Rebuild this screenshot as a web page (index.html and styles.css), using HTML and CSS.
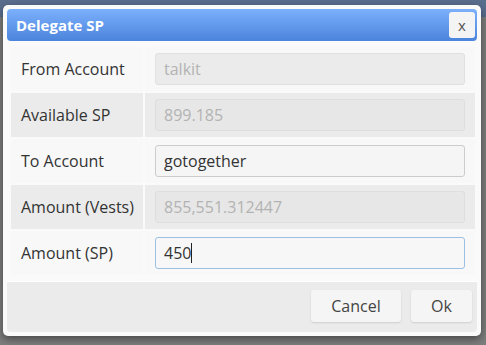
FILE: index.html
```html
<!DOCTYPE html>
<html>
<head>
<meta charset="utf-8">
<link rel="stylesheet" href="styles.css">
</head>
<body>
<div class="page">
  <div class="dialog">
    <div class="titlebar">
      <span class="title">Delegate SP</span>
      <button class="close">x</button>
    </div>
    <div class="content">
      <div class="row odd">
        <div class="label">From Account</div>
        <div class="value"><input class="field disabled" value="talkit" disabled></div>
      </div>
      <div class="row even">
        <div class="label">Available SP</div>
        <div class="value"><input class="field disabled" value="899.185" disabled></div>
      </div>
      <div class="row odd">
        <div class="label">To Account</div>
        <div class="value"><input class="field" value="gotogether"></div>
      </div>
      <div class="row even">
        <div class="label">Amount (Vests)</div>
        <div class="value"><input class="field disabled" value="855,551.312447" disabled></div>
      </div>
      <div class="row odd">
        <div class="label">Amount (SP)</div>
        <div class="value"><div class="field focus">450<span class="caret"></span></div></div>
      </div>
    </div>
    <div class="footer">
      <button class="btn cancel">Cancel</button>
      <button class="btn ok">Ok</button>
    </div>
  </div>
</div>
</body>
</html>
```

FILE: styles.css
```css
* { box-sizing: border-box; }
html, body { margin: 0; padding: 0; }
body {
  width: 486px;
  height: 345px;
  overflow: hidden;
  background: #7f7f7f;
  font-family: "Open Sans", "DejaVu Sans", sans-serif;
}
.page {
  width: 486px;
  height: 345px;
  background: linear-gradient(to bottom, #5a6e8e 0, #5a6e8e 17px, #7d7d7d 17px, #7d7d7d 100%);
  padding: 5px 0 0 3px;
}
.dialog {
  width: 478px;
  height: 331px;
  background: #fafafa;
  border-radius: 5px;
  padding: 4px;
  box-shadow: 0 3px 8px rgba(0, 0, 0, 0.45);
  display: flex;
  flex-direction: column;
}
.titlebar {
  height: 32px;
  flex-shrink: 0;
  border-radius: 4px;
  background: linear-gradient(to bottom, #7cb0fc 0%, #4b84dc 100%);
  display: flex;
  align-items: center;
  justify-content: space-between;
  padding: 0 2px 0 9px;
}
.title {
  color: #ffffff;
  font-weight: 700;
  font-size: 15px;
}
.close {
  width: 26px;
  height: 26px;
  border: none;
  border-radius: 3px;
  background: #f4f4f4;
  color: #555;
  font-family: "Open Sans", sans-serif;
  font-size: 15px;
  line-height: 24px;
  padding: 0;
}
.content {
  margin-top: 6px;
  padding: 0 2px 0 4px;
  display: flex;
  flex-direction: column;
  gap: 2px;
}
.row {
  height: 44px;
  display: flex;
  gap: 2px;
}
.label, .value {
  display: flex;
  align-items: center;
}
.odd .label, .odd .value { background: #f8f8f8; }
.even .label, .even .value { background: #ebebeb; }
.label {
  width: 132px;
  flex-shrink: 0;
  padding-left: 10px;
  font-size: 16px;
  color: #333;
}
.value {
  flex: 1;
  padding: 0 10px;
}
.field {
  width: 310px;
  height: 32px;
  border: 1px solid #cccccc;
  border-radius: 3px;
  background: #f5f5f5;
  font-family: "Open Sans", sans-serif;
  font-size: 16px;
  color: #333;
  padding: 0 8px;
  display: flex;
  align-items: center;
}
.field.disabled {
  background: #ebebeb;
  border-color: #e0e0e0;
  color: #b3b3b3;
}
.even .field.disabled { background: #e7e7e7; border-color: #dedede; }
.field.focus {
  border-color: #9dbfe4;
  background: #f7f7f7;
}
.caret {
  display: inline-block;
  width: 1px;
  height: 20px;
  background: #222;
}
.footer {
  margin-top: 6px;
  border-top: 1px solid #ffffff;
  flex: 1;
  background: #ebebeb;
  border-radius: 0 0 4px 4px;
  display: flex;
  justify-content: flex-end;
  align-items: flex-start;
  padding: 8px 5px 0 0;
  gap: 10px;
}
.btn {
  height: 32px;
  border: none;
  border-radius: 3px;
  background: #f5f5f5;
  box-shadow: 0 1px 2px rgba(0, 0, 0, 0.12);
  font-family: "Open Sans", sans-serif;
  font-size: 16px;
  color: #444;
  padding: 0;
}
.cancel { width: 90px; }
.ok { width: 61px; }
```
